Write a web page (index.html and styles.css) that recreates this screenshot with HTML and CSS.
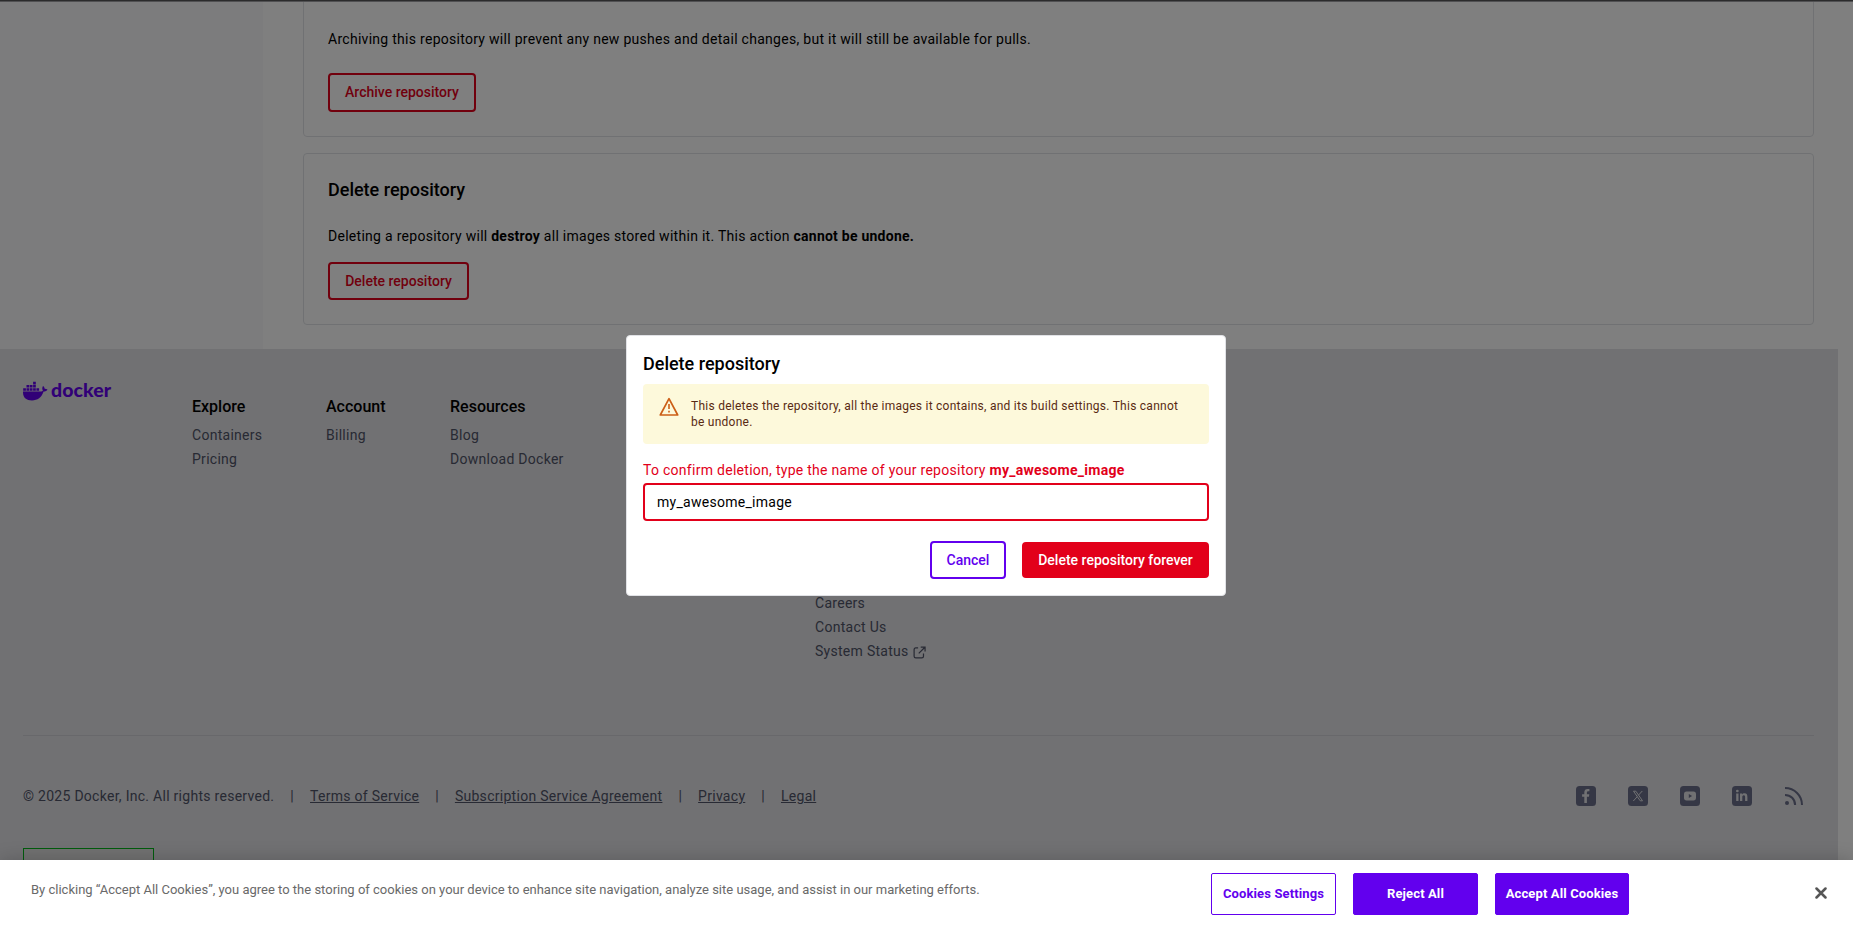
FILE: index.html
```html
<!DOCTYPE html>
<html lang="en">
<head>
<meta charset="utf-8">
<title>Repository settings</title>
<link rel="stylesheet" href="styles.css">
</head>
<body>
<div class="page">
  <div class="topbar"></div>
  <div class="layout">
    <aside class="sidebar"></aside>
    <main class="main">
      <section class="card card-archive">
        <h2 class="card-title">Archive repository</h2>
        <p class="card-text">Archiving this repository will prevent any new pushes and detail changes, but it will still be available for pulls.</p>
        <button class="btn btn-danger-outline btn-tall">Archive repository</button>
      </section>
      <section class="card card-delete">
        <h2 class="card-title">Delete repository</h2>
        <p class="card-text">Deleting a repository will <b>destroy</b> all images stored within it. This action <b>cannot be undone.</b></p>
        <button class="btn btn-danger-outline">Delete repository</button>
      </section>
    </main>
  </div>
  <footer class="footer">
    <div class="footer-top">
      <div class="logo">
        <svg class="whale" viewBox="0 0 25 20" width="25" height="20"><path d="M0 10.6h17.6c1.1 0 1.9-.4 2.3-1-.9-1.300-.8-3.200.1-4.600 1 .7 1.600 1.700 1.700 2.800 1 0 2 .1 2.800.7-.7 1.500-2.200 2.100-3.900 2.100C18.600 16.500 14.500 19.500 9 19.500 3.200 19.500-.2 16.700 0 10.600z"/><path d="M.2 7.200h2.700v2.600H.2zM3.500 7.200h2.700v2.600H3.500zM6.800 7.200h2.700v2.600H6.800zM10.100 7.200h2.700v2.600h-2.700zM13.400 7.200h2.700v2.600h-2.700zM3.500 4h2.700v2.600H3.500zM6.800 4h2.700v2.600H6.800zM10.100 4h2.700v2.600h-2.700zM10.100.8h2.700v2.600h-2.700z"/></svg>
        <span class="wordmark">docker</span>
      </div>
      <div class="col col-explore"><h3>Explore</h3><a>Containers</a><a>Pricing</a></div>
      <div class="col col-account"><h3>Account</h3><a>Billing</a></div>
      <div class="col col-resources"><h3>Resources</h3><a>Blog</a><a>Download Docker</a></div>
      <div class="col col-company"><a>Careers</a><a>Contact Us</a><a>System Status <svg class="ext" viewBox="0 0 14 14" width="13" height="13" fill="none" stroke="currentColor" stroke-width="1.300"><path d="M5.500 2H3Q1.200 2 1.200 4v7Q1.200 12.800 3 12.800h6.500q1.800 0 1.800-1.800V8M8.300 1.200H13v4.700M12.800 1.400 6.200 8"/></svg></a></div>
    </div>
    <div class="footer-bottom">
      <div class="legal">
        <span>© 2025 Docker, Inc. All rights reserved.</span><i>|</i><u>Terms of Service</u><i>|</i><u>Subscription Service Agreement</u><i>|</i><u>Privacy</u><i>|</i><u>Legal</u>
      </div>
      <div class="social">
        <svg viewBox="0 0 20 20" width="20" height="20"><rect class="tile" width="20" height="20" rx="3.500"/><path class="cut" d="M8.300 17v-6.200H6.100V8.300h2.200V6.400C8.300 4.200 9.600 3 11.600 3c.9 0 1.800.1 1.800.1v2.200h-1.100c-1.100 0-1.400.6-1.400 1.300v1.700h2.400l-.4 2.500h-2V17z"/></svg>
        <svg viewBox="0 0 20 20" width="20" height="20"><rect class="tile" width="20" height="20" rx="3.500"/><path class="line" d="M5.500 5.200h2.300l6.700 9.600h-2.300zM14.300 5l-4 4.300M9.200 10.700 5.300 15"/></svg>
        <svg viewBox="0 0 20 20" width="20" height="20"><rect class="tile" width="20" height="20" rx="3.500"/><rect class="cut" x="4" y="5.400" width="12" height="9" rx="2.600"/><path class="tile" d="M8.800 8v3.900l3.300-1.950z"/></svg>
        <svg viewBox="0 0 20 20" width="20" height="20"><rect class="tile" width="20" height="20" rx="3.500"/><path class="cut" d="M4.200 7.500h2.300V15H4.200zM8 7.500h2.200v1c.4-.7 1.200-1.200 2.300-1.200 2.400 0 2.900 1.600 2.900 3.600V15h-2.300v-3.700c0-.9 0-2-1.300-2s-1.500 1-1.500 2V15H8z"/><circle class="cut" cx="5.350" cy="5" r="1.350"/></svg>
        <svg viewBox="0 0 20 20" width="20" height="20"><g class="rss"><path d="M1 2.100c9.500 0 17 7.400 17 16.900M1 8.900c5.700 0 10.100 4.400 10.100 10.100"/></g><circle class="tile" cx="3" cy="17" r="2"/></svg>
      </div>
    </div>
    <div class="badge"></div>
  </footer>
</div>
<div class="backdrop"></div>
<div class="modal">
  <h2 class="modal-title">Delete repository</h2>
  <div class="alert">
    <svg viewBox="0 0 20 20" width="20" height="20"><path d="M10 1.700 18.700 18H1.300z" fill="none" stroke="#cc5f17" stroke-width="1.700" stroke-linejoin="round"/><path d="M10 7v5M10 13.800v1.800" stroke="#cc5f17" stroke-width="1.600"/></svg>
    <p>This deletes the repository, all the images it contains, and its build settings. This cannot be undone.</p>
  </div>
  <label class="field-label">To confirm deletion, type the name of your repository <b>my_awesome_image</b></label>
  <div class="field">my_awesome_image</div>
  <div class="actions">
    <button class="btn btn-cancel">Cancel</button>
    <button class="btn btn-danger">Delete repository forever</button>
  </div>
</div>
<div class="cookies">
  <p>By clicking “Accept All Cookies”, you agree to the storing of cookies on your device to enhance site navigation, analyze site usage, and assist in our marketing efforts.</p>
  <button class="ck ck-outline">Cookies Settings</button>
  <button class="ck">Reject All</button>
  <button class="ck ck-wide">Accept All Cookies</button>
  <svg class="close" viewBox="0 0 12 12" width="12" height="12"><path d="M1.500 1.500l9 9M10.500 1.500l-9 9" stroke="#565656" stroke-width="2.500" stroke-linecap="round"/></svg>
</div>
</body>
</html>
```
FILE: styles.css
```css
* { box-sizing: border-box; }
body { margin: 0; width: 1853px; height: 929px; overflow: hidden; background: #fff; font-family: Roboto, sans-serif; font-size: 14px; line-height: 20px; letter-spacing: .28px; color: #000; }
h2, h3, p { margin: 0; }
button { font-family: inherit; }
.page { height: 929px; overflow: hidden; }
.topbar { height: 2px; background: #565659; border-bottom: 1px solid #a0a0a4; }
.layout { display: flex; height: 347px; }
.sidebar { width: 263px; background: #f9f9fa; }
.main { flex: 1; padding: 0 39px 0 40px; display: flex; flex-direction: column; gap: 16px; }
.card { border: 1px solid #e1e2e6; border-radius: 4px; padding: 23px 24px; display: flex; flex-direction: column; align-items: flex-start; }
.card-archive { height: 190px; margin-top: -55px; padding-top: 31px; clip-path: inset(55px 0 0 0); flex: none; }
.card-archive .card-text { margin-top: 25px; }
.card-delete { height: 172px; flex: none; }
.card-title { font-size: 18px; line-height: 25px; font-weight: 500; letter-spacing: 0; }
.card-text { margin-top: 24px; }
.card-text b, .field-label b { font-weight: 700; }
.card-text b { letter-spacing: .24px; }
.btn { height: 38px; border-radius: 4px; border: 2px solid; padding: 0 15px; font-size: 14px; font-weight: 500; letter-spacing: 0; background: none; white-space: nowrap; }
.btn-danger-outline { color: #e2001a; width: 141px; margin-top: 16px; padding: 0; }
.btn-tall { width: 148px; height: 39px; margin-top: 24px; padding-bottom: 1px; }
.footer { width: 1838px; height: 580px; background: #e2e2e6; padding: 0 24px 0 23px; color: #505468; }
.footer-top { height: 387px; border-bottom: 1px solid #d0d1d6; display: flex; padding-top: 46px; }
.logo { width: 169px; display: flex; margin-top: -14px; align-items: flex-start; color: #6200ee; }
.whale { fill: #6200ee; }
.wordmark { font: 900 19.5px/20px Lato, sans-serif; letter-spacing: .05px; margin: -1px 0 0 3px; }
.col { display: flex; flex-direction: column; line-height: 24px; }
.col h3 { font-size: 16px; line-height: 24px; font-weight: 500; letter-spacing: 0; color: #000; margin-bottom: 4px; }
.col-explore { width: 134px; }
.col-account { width: 124px; }
.col-resources { width: 365px; }
.col-company { padding-top: 196px; }
.ext { vertical-align: -3px; margin-left: 1px; }
.footer-bottom { display: flex; justify-content: space-between; align-items: center; height: 120px; }
.legal { display: flex; }
.legal i { font-style: normal; width: 35.7px; text-align: center; }
.social { display: flex; gap: 32px; margin-right: 10px; }
.tile { fill: #6b6f8a; }
.cut { fill: #e2e2e6; }
.line { fill: none; stroke: #e2e2e6; stroke-width: 1; }
.rss { fill: none; stroke: #6b6f8a; stroke-width: 2; }
.badge { width: 131px; height: 40px; margin-top: -8px; border: 1px solid #00b818; background: #e2e2e2; }
.backdrop { position: absolute; inset: 0; background: rgba(0,0,0,.5); }
.modal { position: absolute; left: 626px; top: 335px; width: 600px; height: 261px; background: #fff; border: 1px solid #e1e2e6; border-radius: 4px; padding: 16px; display: flex; flex-direction: column; }
.modal-title { font-size: 18px; line-height: 24px; font-weight: 500; letter-spacing: 0; }
.alert { height: 60px; margin-top: 8px; border-radius: 4px; background: #fdf9db; padding: 14px 16px; display: flex; gap: 12px; color: #592a13; font-size: 12px; line-height: 16px; letter-spacing: .255px; flex: none; }
.alert p { width: 504px; }
.alert svg { flex: none; margin-top: -1px; }
.field-label { margin-top: 16px; color: #e2001a; }
.field { height: 38px; margin-top: 3px; border: 2px solid #e2001a; border-radius: 4px; line-height: 34px; padding-left: 12px; }
.actions { display: flex; justify-content: flex-end; align-items: center; gap: 16px; margin-top: 20px; }
.btn-cancel { color: #6200ee; width: 76px; padding: 0; }
.btn-danger { height: 36px; background: #e2001a; border-color: #e2001a; color: #fff; width: 187px; padding: 0; }
.cookies { position: absolute; left: 0; top: 860px; width: 1853px; height: 69px; background: #fff; box-shadow: 0 0 18px rgba(0,0,0,.2); display: flex; align-items: flex-start; padding: 13px 26px 0 31px; color: #696969; font-size: 13px; letter-spacing: 0; }
.cookies p { width: 1180px; padding-top: 7px; }
.ck { width: 125px; height: 42px; margin-right: 17px; border: 1px solid #6200ee; border-radius: 2px; background: #6200ee; color: #fff; font-size: 13px; font-weight: 700; letter-spacing: .12px; padding: 0 0 2px; }
.ck-outline { background: #fff; color: #6200ee; }
.ck-wide { width: 134px; margin-right: auto; }
.close { margin-top: 14px; }
```
